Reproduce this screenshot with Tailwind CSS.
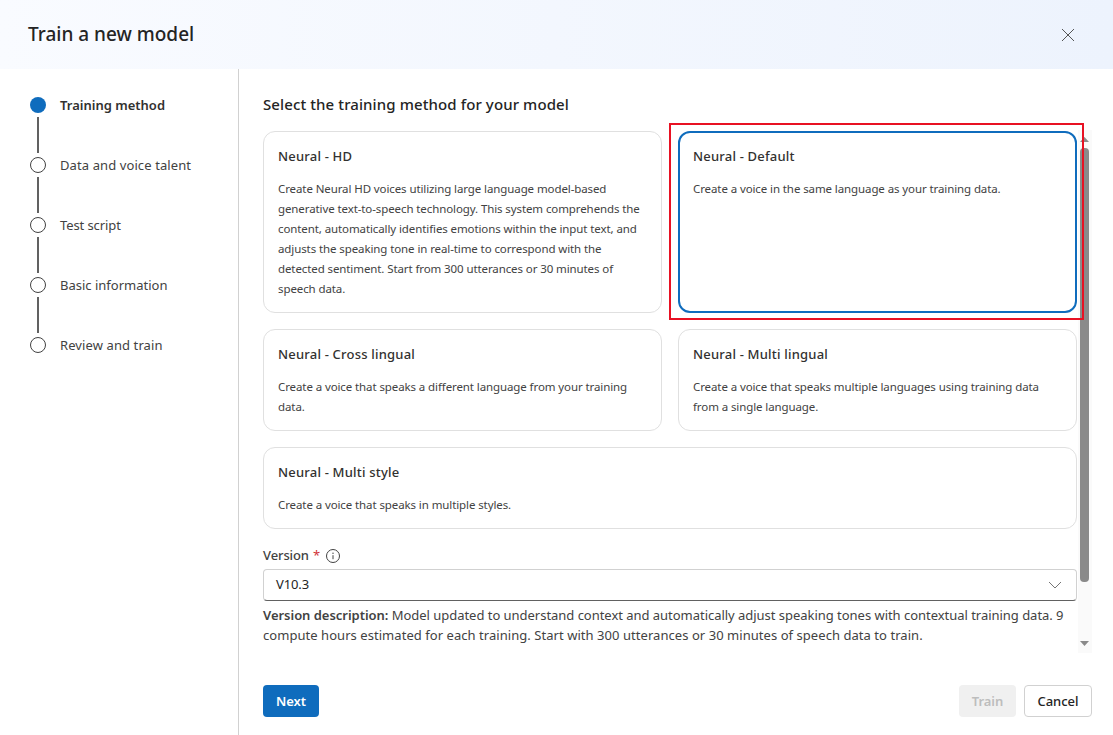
<!DOCTYPE html>
<html lang="en">
<head>
  <meta charset="UTF-8" />
  <title>Train a new model</title>
  <script src="https://cdn.jsdelivr.net/npm/@tailwindcss/browser@4"></script>
</head>
<body class="bg-white font-['Noto_Sans','Open_Sans',sans-serif] text-[#242424]">
  <div class="relative w-[1113px] h-[735px] overflow-hidden flex flex-col">

    <!-- header -->
    <header class="h-[69px] shrink-0 flex items-center justify-between pl-7 pr-[38px] bg-gradient-to-r from-[#f9fbff] to-[#edf3fd]">
      <h1 class="text-[19px] font-medium">Train a new model</h1>
      <svg width="14" height="14" viewBox="0 0 14 14" fill="none" stroke="#555" stroke-width="1"><path d="M1 1l12 12M13 1L1 13"/></svg>
    </header>

    <div class="flex flex-1 min-h-0">
      <!-- steps -->
      <nav class="w-[239px] shrink-0 border-r border-[#d1d1d1] pl-[30px] pt-[27px] text-[13px] tracking-[0.1px] text-[#424242]">
        <div class="flex items-center gap-[14px] h-[18px]">
          <span class="w-4 h-4 rounded-full bg-[#0f6cbd] shrink-0"></span>
          <span class="mt-[2px] font-semibold tracking-normal text-[#323130]">Training method</span>
        </div>
        <div class="w-[2px] h-[36px] bg-[#616161] ml-[7px] my-[3px]"></div>
        <div class="flex items-center gap-[14px] h-[18px]">
          <span class="w-4 h-4 rounded-full border border-[#424242] shrink-0"></span>
          <span class="mt-[2px]">Data and voice talent</span>
        </div>
        <div class="w-[2px] h-[36px] bg-[#616161] ml-[7px] my-[3px]"></div>
        <div class="flex items-center gap-[14px] h-[18px]">
          <span class="w-4 h-4 rounded-full border border-[#424242] shrink-0"></span>
          <span class="mt-[2px] tracking-[-0.1px]">Test script</span>
        </div>
        <div class="w-[2px] h-[36px] bg-[#616161] ml-[7px] my-[3px]"></div>
        <div class="flex items-center gap-[14px] h-[18px]">
          <span class="w-4 h-4 rounded-full border border-[#424242] shrink-0"></span>
          <span class="mt-[2px] tracking-normal">Basic information</span>
        </div>
        <div class="w-[2px] h-[36px] bg-[#616161] ml-[7px] my-[3px]"></div>
        <div class="flex items-center gap-[14px] h-[18px]">
          <span class="w-4 h-4 rounded-full border border-[#424242] shrink-0"></span>
          <span class="mt-[2px]">Review and train</span>
        </div>
      </nav>

      <!-- main -->
      <main class="flex-1 flex flex-col pl-6 pr-[21px]">
        <h2 class="h-[62px] pt-[24px] text-[15px] leading-[22px] font-medium tracking-[0.1px]">Select the training method for your model</h2>

        <div class="flex gap-[1px] h-[523px] -mt-[1px]">
          <div class="w-[814px] shrink-0 pt-[1px]">
            <div class="grid grid-cols-2 gap-4">
              <div class="h-[182px] rounded-xl border border-[#e0e0e0] px-[14px] pt-[15px]">
                <h3 class="text-[13px] leading-[18px] font-medium tracking-[0.2px] text-[#323130]">Neural - HD</h3>
                <p class="mt-[14px] text-[11.5px] leading-5 tracking-[-0.1px] text-[#424242]">Create Neural HD voices utilizing large language model-based<br>generative text-to-speech technology. This system comprehends the<br>content, automatically identifies emotions within the input text, and<br>adjusts the speaking tone in real-time to correspond with the<br>detected sentiment. Start from 300 utterances or 30 minutes of<br>speech data.</p>
              </div>
              <div class="h-[182px] rounded-xl border-2 border-[#0f6cbd] px-[13px] pt-[14px]">
                <h3 class="text-[13px] leading-[18px] font-medium tracking-[0.2px] text-[#323130]">Neural - Default</h3>
                <p class="mt-[14px] text-[11.5px] leading-5 tracking-[-0.1px] text-[#424242]">Create a voice in the same language as your training data.</p>
              </div>
              <div class="h-[102px] rounded-xl border border-[#e0e0e0] px-[14px] pt-[15px]">
                <h3 class="text-[13px] leading-[18px] font-medium tracking-[0.2px] text-[#323130]">Neural - Cross lingual</h3>
                <p class="mt-[14px] text-[11.5px] leading-5 tracking-[-0.1px] text-[#424242]">Create a voice that speaks a different language from your training<br>data.</p>
              </div>
              <div class="h-[102px] rounded-xl border border-[#e0e0e0] px-[14px] pt-[15px]">
                <h3 class="text-[13px] leading-[18px] font-medium tracking-[0.2px] text-[#323130]">Neural - Multi lingual</h3>
                <p class="mt-[14px] text-[11.5px] leading-5 tracking-[-0.1px] text-[#424242]">Create a voice that speaks multiple languages using training data<br>from a single language.</p>
              </div>
              <div class="col-span-2 h-[82px] rounded-xl border border-[#e0e0e0] px-[14px] pt-[15px]">
                <h3 class="text-[13px] leading-[18px] font-medium tracking-[0.2px] text-[#323130]">Neural - Multi style</h3>
                <p class="mt-[14px] text-[11.5px] leading-5 tracking-[-0.1px] text-[#424242]">Create a voice that speaks in multiple styles.</p>
              </div>
            </div>

            <div class="flex items-center gap-1 mt-[17px] h-5 text-[13px] tracking-[-0.1px] text-[#424242]">
              <span class="font-medium">Version</span>
              <span class="text-[#d13438]">*</span>
              <svg class="ml-[2px]" width="14" height="14" viewBox="0 0 14 14" fill="none" stroke="#424242"><circle cx="7" cy="7" r="6.5"/><path d="M7 6.2v4"/><circle cx="7" cy="4.2" r=".7" fill="#424242" stroke="none"/></svg>
            </div>
            <div class="mt-[3px] h-8 rounded border border-[#d1d1d1] border-b-[#616161] flex items-center justify-between pl-3 pr-[14px] text-[13px] tracking-[-0.1px]">
              <span>V10.3</span>
              <svg width="14" height="8" viewBox="0 0 14 8" fill="none" stroke="#757575"><path d="M1 1l6 6 6-6"/></svg>
            </div>
            <p class="mt-1 text-[13px] leading-5 tracking-[-0.03px] text-[#424242]"><span class="font-semibold">Version description:</span> Model updated to understand context and automatically adjust speaking tones with contextual training data. 9<br><span class="tracking-[0.05px]">compute hours estimated for each training. Start with 300 utterances or 30 minutes of speech data to train.</span></p>
          </div>

          <!-- scrollbar -->
          <div class="w-[14px] shrink-0 bg-[#fafafa] flex flex-col items-start pl-[2px]">
            <svg class="mt-[7px]" width="9" height="5" viewBox="0 0 9 5" fill="#8a8a8a"><path d="M4.5 0L9 5H0z"/></svg>
            <div class="mt-[6px] w-[9px] h-[434px] rounded bg-[#8a8a8a]"></div>
            <svg class="mt-auto mb-[7px]" width="9" height="5" viewBox="0 0 9 5" fill="#8a8a8a"><path d="M4.5 5L0 0h9z"/></svg>
          </div>
        </div>

        <!-- footer -->
        <footer class="flex items-center mt-[32px] text-[13px]">
          <button class="w-14 h-8 pt-[2px] rounded bg-[#0f6cbd] text-white font-semibold">Next</button>
          <button class="ml-auto w-[57px] h-8 pt-[2px] rounded bg-[#f0f0f0] text-[#bdbdbd] font-semibold">Train</button>
          <button class="ml-2 w-[68px] h-8 pt-[2px] rounded border border-[#d1d1d1] font-medium">Cancel</button>
        </footer>
      </main>
    </div>

    <!-- red highlight -->
    <div class="absolute left-[669px] top-[123px] w-[415px] h-[197px] border-2 border-[#e81123] pointer-events-none"></div>
  </div>
</body>
</html>
